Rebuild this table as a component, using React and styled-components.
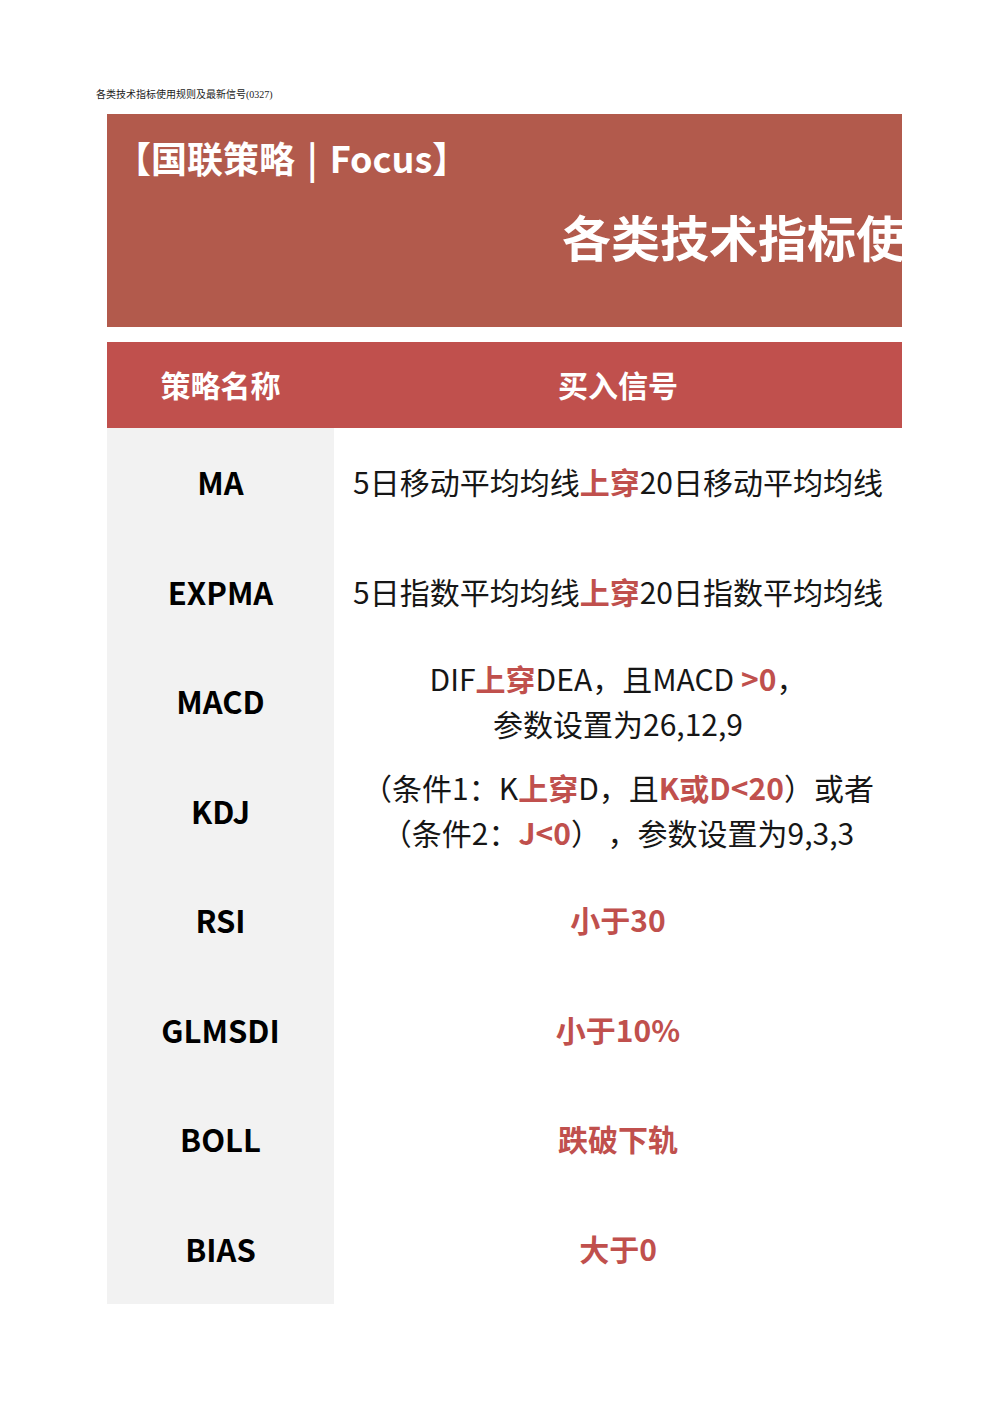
import React from "react";
import styled, { createGlobalStyle } from "styled-components";

const Global = createGlobalStyle`
  html, body { margin: 0; padding: 0; background: #ffffff; }
  body { font-family: "Noto Sans CJK SC", "Noto Sans", sans-serif; }
`;

const Page = styled.div`
  width: 992px;
  min-height: 1403px;
  box-sizing: border-box;
  padding: 88px 0 0 96px;
`;

const Caption = styled.div`
  font-family: "Liberation Serif", "Noto Sans CJK SC", serif;
  font-size: 10px;
  line-height: 14px;
  color: #222;
  margin-bottom: 12px;
`;

const Sheet = styled.div`
  margin-left: 11px;
  width: 795px;
  display: flex;
  flex-direction: column;
`;

const Banner = styled.div`
  height: 213px;
  background: #b25a4c;
  overflow: hidden;
  display: flex;
  flex-direction: column;
  padding: 19px 0 0 8px;
  box-sizing: border-box;
`;

const BannerTag = styled.div`
  color: #ffffff;
  font-size: 36px;
  font-weight: 700;
  line-height: 48px;
  white-space: nowrap;
`;

const Bar = styled.span`
  margin: 0 12px;
`;

const BannerTitle = styled.div`
  color: #ffffff;
  font-size: 49px;
  font-weight: 700;
  line-height: 64px;
  margin: 23px 0 0 447px;
  white-space: nowrap;
`;

const Table = styled.div`
  margin-top: 15px;
  display: grid;
  grid-template-columns: 227px minmax(0, 1fr);
  grid-template-rows: 86px repeat(8, 109.5px);
`;

const HeadCell = styled.div`
  background: #c0504d;
  color: #ffffff;
  font-size: 30px;
  font-weight: 700;
  display: flex;
  align-items: center;
  justify-content: center;
  padding-bottom: 3px;
  box-sizing: border-box;
`;

const NameCell = styled.div`
  background: #f2f2f2;
  color: #000;
  font-size: 31px;
  font-weight: 700;
  display: flex;
  align-items: center;
  justify-content: center;
  padding-bottom: 2px;
  box-sizing: border-box;
`;

const SignalCell = styled.div`
  display: flex;
  align-items: center;
  justify-content: center;
  min-width: 0;
  padding-bottom: 2px;
  box-sizing: border-box;
`;

const SignalText = styled.div`
  color: #161616;
  font-size: 30px;
  font-weight: 400;
  line-height: 45px;
  text-align: center;
  white-space: nowrap;
`;

const Red = styled.span`
  color: #c0504d;
  font-weight: 700;
`;

const rows = [
  ["MA", <>5日移动平均均线<Red>上穿</Red>20日移动平均均线</>],
  ["EXPMA", <>5日指数平均均线<Red>上穿</Red>20日指数平均均线</>],
  ["MACD", <>DIF<Red>上穿</Red>DEA，且MACD<Red> &gt;0</Red>，<br />参数设置为26,12,9</>],
  ["KDJ", <>（条件1：K<Red>上穿</Red>D，且<Red>K或D&lt;20</Red>）或者<br />（条件2：<Red>J&lt;0</Red>）&nbsp;，参数设置为9,3,3</>],
  ["RSI", <Red>小于30</Red>],
  ["GLMSDI", <Red>小于10%</Red>],
  ["BOLL", <Red>跌破下轨</Red>],
  ["BIAS", <Red>大于0</Red>],
];

export default function App() {
  return (
    <Page>
      <Global />
      <Caption>各类技术指标使用规则及最新信号(0327)</Caption>
      <Sheet>
        <Banner>
          <BannerTag>【国联策略<Bar>|</Bar>Focus】</BannerTag>
          <BannerTitle>各类技术指标使用规则及最新信号</BannerTitle>
        </Banner>
        <Table>
          <HeadCell>策略名称</HeadCell>
          <HeadCell>买入信号</HeadCell>
          {rows.map(([name, sig]) => (
            <React.Fragment key={name}>
              <NameCell>{name}</NameCell>
              <SignalCell>
                <SignalText>{sig}</SignalText>
              </SignalCell>
            </React.Fragment>
          ))}
        </Table>
      </Sheet>
    </Page>
  );
}
